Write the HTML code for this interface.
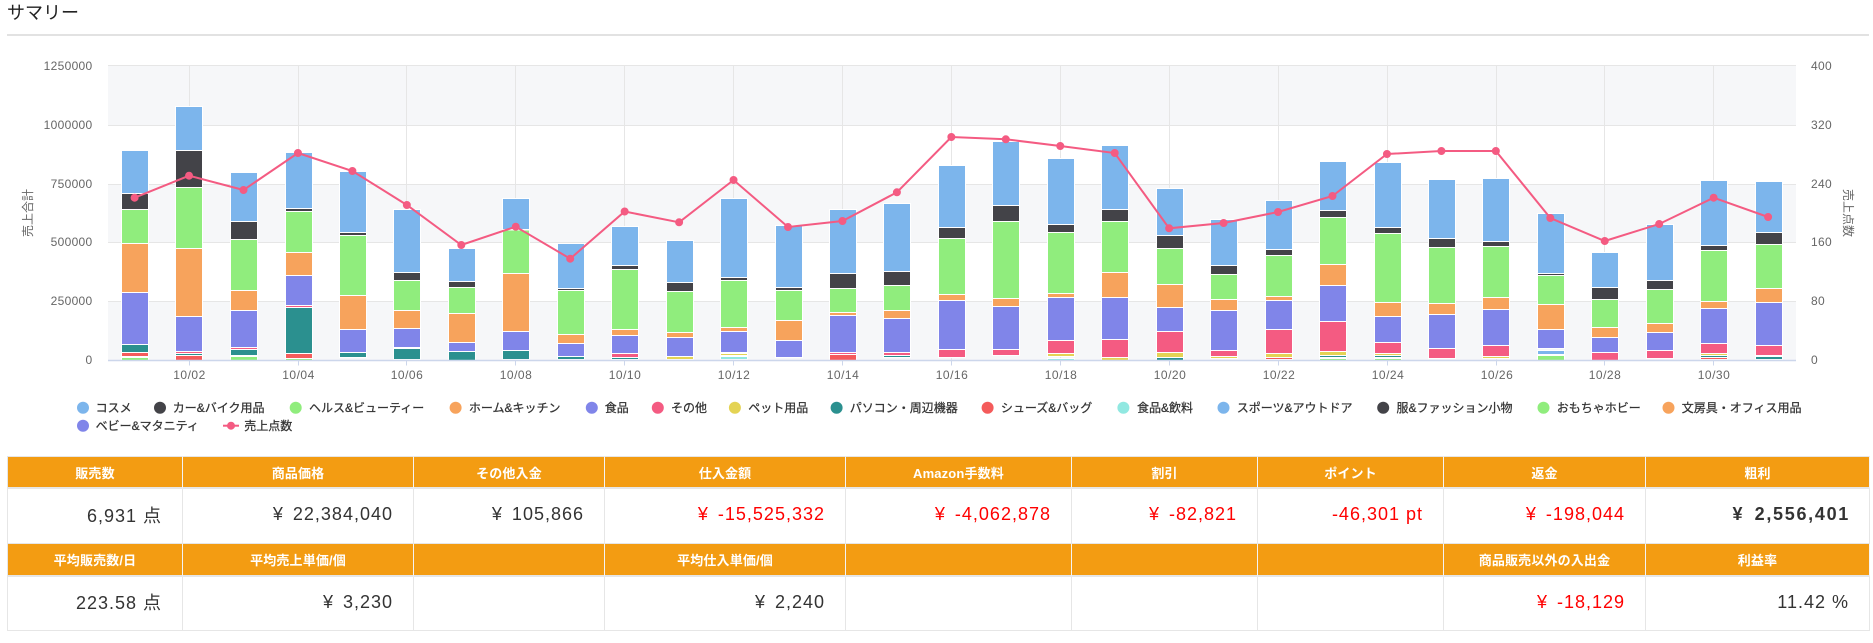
<!DOCTYPE html>
<html lang="ja"><head><meta charset="utf-8"><title>サマリー</title>
<style>
html,body{margin:0;padding:0;background:#fff}
body{width:1873px;height:643px;position:relative;overflow:hidden;font-family:"Liberation Sans","Noto Sans CJK JP",sans-serif;color:#333}
h1{position:absolute;left:7px;top:0;margin:0;font-size:18px;line-height:26px;font-weight:400;color:#222}
#rule{position:absolute;left:7px;top:34px;width:1862px;height:2px;background:#e2e2e2}
svg{position:absolute;left:0;top:0}
svg text{font-family:"Liberation Sans","Noto Sans CJK JP",sans-serif;font-size:12px;fill:#666}
.ax text{letter-spacing:.3px}
.xl text{letter-spacing:.5px}
.lg text{fill:#333;stroke:#333;stroke-width:.25px}
.bars rect{x:0;width:27px;stroke:#fff;stroke-width:1}
.B{fill:#7cb5ec}.D{fill:#434348}.G{fill:#90ed7d}.O{fill:#f7a35c}.P{fill:#8085e9}.K{fill:#f45b82}.Y{fill:#e4d354}.T{fill:#2b908f}.R{fill:#f45b5b}.C{fill:#91e8e1}
table{position:absolute;left:7px;top:456px;width:1863px;table-layout:fixed;border-collapse:separate;border-spacing:0;border-left:1px solid #e6e6e6}
th,td{box-sizing:border-box;border-right:1px solid #e6e6e6;padding:0;overflow:hidden;white-space:nowrap}
th{background:#f39c12;color:#fff;font-size:13px;font-weight:700;text-align:center;border-right-color:#f4f4f4;height:33px;border-bottom:2px solid #e6e6e6;letter-spacing:.15px}
tr:first-child th{border-top:1px solid #e6e6e6}
td{font-size:18px;text-align:right;padding-right:20px;color:#333;border-bottom:1px solid #e6e6e6;letter-spacing:1px;word-spacing:-1.5px}
td.n{word-spacing:0}
tr.a td{height:55px;padding-bottom:3px}
tr.c td{height:54px;padding-bottom:3px}
td.r{color:#f00}td.b{font-weight:700;letter-spacing:1.7px;padding-right:19px}
</style></head><body>
<h1>サマリー</h1><div id="rule"></div>
<svg width="1873" height="450" viewBox="0 0 1873 450">
<rect x="108" y="66" width="1688" height="59" fill="#f6f7f9"/><rect x="108" y="184" width="1688" height="58" fill="#f6f7f9"/><rect x="108" y="301" width="1688" height="59" fill="#f6f7f9"/>
<path d="M108 65.5H1796M108 125.5H1796M108 184.5H1796M108 242.5H1796M108 301.5H1796M189.5 66V360M298.5 66V360M406.5 66V360M515.5 66V360M624.5 66V360M733.5 66V360M842.5 66V360M951.5 66V360M1060.5 66V360M1169.5 66V360M1278.5 66V360M1387.5 66V360M1496.5 66V360M1604.5 66V360M1713.5 66V360" stroke="#e6e6e6" stroke-width="1" fill="none"/>
<g class="bars">
<g transform="translate(121.5)"><rect class="B" y="150.5" height="43"/><rect class="D" y="193.5" height="16"/><rect class="G" y="209.5" height="34"/><rect class="O" y="243.5" height="49"/><rect class="P" y="292.5" height="52"/><rect class="T" y="344.5" height="8"/><rect class="R" y="352.5" height="4"/><rect class="G" y="357.5" height="3"/></g>
<g transform="translate(175.5)"><rect class="B" y="106.5" height="44"/><rect class="D" y="150.5" height="37"/><rect class="G" y="187.5" height="61"/><rect class="O" y="248.5" height="68"/><rect class="P" y="316.5" height="35"/><rect class="K" y="351.5" height="2"/><rect class="T" y="353.5" height="2"/><rect class="R" y="355.5" height="5"/></g>
<g transform="translate(230.5)"><rect class="B" y="172.5" height="49"/><rect class="D" y="221.5" height="18"/><rect class="G" y="239.5" height="51"/><rect class="O" y="290.5" height="20"/><rect class="P" y="310.5" height="37"/><rect class="K" y="347.5" height="2"/><rect class="T" y="349.5" height="6"/><rect class="G" y="356.5" height="4"/></g>
<g transform="translate(285.5)"><rect class="B" y="152.5" height="56"/><rect class="D" y="208.5" height="3"/><rect class="G" y="211.5" height="41"/><rect class="O" y="252.5" height="23"/><rect class="P" y="275.5" height="30"/><rect class="K" y="305.5" height="2"/><rect class="T" y="307.5" height="46"/><rect class="R" y="353.5" height="5"/><rect class="G" y="358.5" height="2"/></g>
<g transform="translate(339.5)"><rect class="B" y="171.5" height="61"/><rect class="D" y="232.5" height="3"/><rect class="G" y="235.5" height="60"/><rect class="O" y="295.5" height="34"/><rect class="P" y="329.5" height="23"/><rect class="T" y="352.5" height="5"/></g>
<g transform="translate(393.5)"><rect class="B" y="209.5" height="63"/><rect class="D" y="272.5" height="8"/><rect class="G" y="280.5" height="30"/><rect class="O" y="310.5" height="18"/><rect class="P" y="328.5" height="19"/><rect class="T" y="348.5" height="11"/></g>
<g transform="translate(448.5)"><rect class="B" y="248.5" height="33"/><rect class="D" y="281.5" height="6"/><rect class="G" y="287.5" height="26"/><rect class="O" y="313.5" height="29"/><rect class="P" y="342.5" height="9"/><rect class="T" y="351.5" height="9"/></g>
<g transform="translate(502.5)"><rect class="B" y="198.5" height="31"/><rect class="G" y="230" height="43.5"/><rect class="O" y="273.5" height="58"/><rect class="P" y="331.5" height="19"/><rect class="T" y="350.5" height="9"/></g>
<g transform="translate(557.5)"><rect class="B" y="243.5" height="45"/><rect class="D" y="288.5" height="2"/><rect class="G" y="290.5" height="44"/><rect class="O" y="334.5" height="9"/><rect class="P" y="343.5" height="13"/><rect class="T" y="356.5" height="3"/></g>
<g transform="translate(611.5)"><rect class="B" y="226.5" height="39"/><rect class="D" y="265.5" height="4"/><rect class="G" y="269.5" height="60"/><rect class="O" y="329.5" height="6"/><rect class="P" y="335.5" height="18"/><rect class="K" y="353.5" height="4"/><rect class="T" y="357.5" height="2"/></g>
<g transform="translate(666.5)"><rect class="B" y="240.5" height="42"/><rect class="D" y="282.5" height="9"/><rect class="G" y="291.5" height="41"/><rect class="O" y="332.5" height="5"/><rect class="P" y="337.5" height="19"/><rect class="Y" y="356.5" height="3"/></g>
<g transform="translate(720.5)"><rect class="B" y="198.5" height="79"/><rect class="D" y="277.5" height="3"/><rect class="G" y="280.5" height="47"/><rect class="O" y="327.5" height="4"/><rect class="P" y="331.5" height="21"/><rect class="Y" y="353.5" height="2"/><rect class="C" y="356.5" height="3"/></g>
<g transform="translate(775.5)"><rect class="B" y="225.5" height="62"/><rect class="D" y="287.5" height="3"/><rect class="G" y="290.5" height="30"/><rect class="O" y="320.5" height="20"/><rect class="P" y="340.5" height="17"/></g>
<g transform="translate(829.5)"><rect class="B" y="209.5" height="64"/><rect class="D" y="273.5" height="15"/><rect class="G" y="288.5" height="24"/><rect class="O" y="312.5" height="3"/><rect class="P" y="315.5" height="37"/><rect class="K" y="352.5" height="2"/><rect class="R" y="354.5" height="6"/></g>
<g transform="translate(883.5)"><rect class="B" y="203.5" height="68"/><rect class="D" y="271.5" height="14"/><rect class="G" y="285.5" height="25"/><rect class="O" y="310.5" height="8"/><rect class="P" y="318.5" height="34"/><rect class="K" y="352.5" height="3"/><rect class="T" y="355.5" height="2"/></g>
<g transform="translate(938.5)"><rect class="B" y="165.5" height="62"/><rect class="D" y="227.5" height="11"/><rect class="G" y="238.5" height="56"/><rect class="O" y="294.5" height="6"/><rect class="P" y="300.5" height="49"/><rect class="K" y="349.5" height="8"/></g>
<g transform="translate(992.5)"><rect class="B" y="141.5" height="64"/><rect class="D" y="205.5" height="16"/><rect class="G" y="221.5" height="77"/><rect class="O" y="298.5" height="8"/><rect class="P" y="306.5" height="43"/><rect class="K" y="349.5" height="6"/></g>
<g transform="translate(1047.5)"><rect class="B" y="158.5" height="66"/><rect class="D" y="224.5" height="8"/><rect class="G" y="232.5" height="61"/><rect class="O" y="293.5" height="4"/><rect class="P" y="297.5" height="43"/><rect class="K" y="340.5" height="13"/><rect class="Y" y="353.5" height="3"/><rect class="C" y="358.5" height="2"/></g>
<g transform="translate(1101.5)"><rect class="B" y="145.5" height="64"/><rect class="D" y="209.5" height="12"/><rect class="G" y="221.5" height="51"/><rect class="O" y="272.5" height="25"/><rect class="P" y="297.5" height="42"/><rect class="K" y="339.5" height="18"/><rect class="Y" y="357.5" height="3"/></g>
<g transform="translate(1156.5)"><rect class="B" y="188.5" height="47"/><rect class="D" y="235.5" height="13"/><rect class="G" y="248.5" height="36"/><rect class="O" y="284.5" height="23"/><rect class="P" y="307.5" height="24"/><rect class="K" y="331.5" height="21"/><rect class="Y" y="352.5" height="5"/><rect class="T" y="357.5" height="3"/></g>
<g transform="translate(1210.5)"><rect class="B" y="219.5" height="46"/><rect class="D" y="265.5" height="9"/><rect class="G" y="274.5" height="25"/><rect class="O" y="299.5" height="11"/><rect class="P" y="310.5" height="40"/><rect class="K" y="350.5" height="6"/><rect class="Y" y="356.5" height="2"/></g>
<g transform="translate(1265.5)"><rect class="B" y="200.5" height="49"/><rect class="D" y="249.5" height="6"/><rect class="G" y="255.5" height="41"/><rect class="O" y="296.5" height="4"/><rect class="P" y="300.5" height="29"/><rect class="K" y="329.5" height="24"/><rect class="Y" y="353.5" height="4"/><rect class="R" y="357.5" height="2"/></g>
<g transform="translate(1319.5)"><rect class="B" y="161.5" height="49"/><rect class="D" y="210.5" height="7"/><rect class="G" y="217.5" height="47"/><rect class="O" y="264.5" height="21"/><rect class="P" y="285.5" height="36"/><rect class="K" y="321.5" height="30"/><rect class="Y" y="351.5" height="4"/><rect class="T" y="355.5" height="2"/><rect class="G" y="358.5" height="2"/></g>
<g transform="translate(1374.5)"><rect class="B" y="162.5" height="65"/><rect class="D" y="227.5" height="6"/><rect class="G" y="233.5" height="69"/><rect class="O" y="302.5" height="14"/><rect class="P" y="316.5" height="26"/><rect class="K" y="342.5" height="11"/><rect class="Y" y="353.5" height="2"/><rect class="T" y="355.5" height="2"/><rect class="G" y="358.5" height="2"/></g>
<g transform="translate(1428.5)"><rect class="B" y="179.5" height="59"/><rect class="D" y="238.5" height="9"/><rect class="G" y="247.5" height="56"/><rect class="O" y="303.5" height="11"/><rect class="P" y="314.5" height="34"/><rect class="K" y="348.5" height="10"/></g>
<g transform="translate(1482.5)"><rect class="B" y="178.5" height="63"/><rect class="D" y="241.5" height="5"/><rect class="G" y="246.5" height="51"/><rect class="O" y="297.5" height="12"/><rect class="P" y="309.5" height="36"/><rect class="K" y="345.5" height="11"/><rect class="Y" y="356.5" height="2"/></g>
<g transform="translate(1537.5)"><rect class="B" y="213.5" height="60"/><rect class="D" y="273.5" height="2"/><rect class="G" y="275.5" height="29"/><rect class="O" y="304.5" height="25"/><rect class="P" y="329.5" height="19"/><rect class="B" y="350.5" height="4"/><rect class="G" y="355.5" height="5"/></g>
<g transform="translate(1591.5)"><rect class="B" y="252.5" height="35"/><rect class="D" y="287.5" height="12"/><rect class="G" y="299.5" height="28"/><rect class="O" y="327.5" height="10"/><rect class="P" y="337.5" height="15"/><rect class="K" y="352.5" height="8"/></g>
<g transform="translate(1646.5)"><rect class="B" y="224.5" height="56"/><rect class="D" y="280.5" height="9"/><rect class="G" y="289.5" height="34"/><rect class="O" y="323.5" height="9"/><rect class="P" y="332.5" height="18"/><rect class="K" y="350.5" height="8"/></g>
<g transform="translate(1700.5)"><rect class="B" y="180.5" height="65"/><rect class="D" y="245.5" height="5"/><rect class="G" y="250.5" height="51"/><rect class="O" y="301.5" height="7"/><rect class="P" y="308.5" height="35"/><rect class="K" y="343.5" height="10"/><rect class="Y" y="353.5" height="2"/><rect class="T" y="355.5" height="2"/><rect class="R" y="357.5" height="2"/></g>
<g transform="translate(1755.5)"><rect class="B" y="181.5" height="51"/><rect class="D" y="232.5" height="12"/><rect class="G" y="244.5" height="44"/><rect class="O" y="288.5" height="14"/><rect class="P" y="302.5" height="43"/><rect class="K" y="345.5" height="10"/><rect class="T" y="356.5" height="3"/></g>
</g>
<path d="M108 360.5H1796" stroke="#ccd6eb" stroke-width="1.5" fill="none"/>
<path d="M189.5 360V365.5M298.5 360V365.5M406.5 360V365.5M515.5 360V365.5M624.5 360V365.5M733.5 360V365.5M842.5 360V365.5M951.5 360V365.5M1060.5 360V365.5M1169.5 360V365.5M1278.5 360V365.5M1387.5 360V365.5M1496.5 360V365.5M1604.5 360V365.5M1713.5 360V365.5" stroke="#ccd6eb" stroke-width="1" fill="none"/>
<polyline fill="none" stroke="#f45b82" stroke-width="2" points="134.6,197.7 189.05,175.7 243.5,190 297.95,153 352.4,171 406.85,205 461.3,245 515.75,226.7 570.2,258.7 624.65,211.5 679.1,222.3 733.55,180 788,227 842.45,221 896.9,192.3 951.35,137 1005.8,139.3 1060.25,146 1114.7,153 1169.15,228.3 1223.6,223 1278.05,212 1332.5,196 1386.95,154 1441.4,151 1495.85,151 1550.3,218 1604.75,241 1659.2,224 1713.65,197.7 1768.1,217"/>
<path fill="none" stroke="#f45b82" stroke-width="8" stroke-linecap="round" d="M134.6 197.7h0M189.05 175.7h0M243.5 190h0M297.95 153h0M352.4 171h0M406.85 205h0M461.3 245h0M515.75 226.7h0M570.2 258.7h0M624.65 211.5h0M679.1 222.3h0M733.55 180h0M788 227h0M842.45 221h0M896.9 192.3h0M951.35 137h0M1005.8 139.3h0M1060.25 146h0M1114.7 153h0M1169.15 228.3h0M1223.6 223h0M1278.05 212h0M1332.5 196h0M1386.95 154h0M1441.4 151h0M1495.85 151h0M1550.3 218h0M1604.75 241h0M1659.2 224h0M1713.65 197.7h0M1768.1 217h0"/>
<g text-anchor="end" class="ax">
<text x="92.5" y="70">1250000</text><text x="92.5" y="129">1000000</text><text x="92.5" y="188">750000</text><text x="92.5" y="246">500000</text><text x="92.5" y="305">250000</text><text x="92.5" y="364">0</text>
</g>
<g class="ax">
<text x="1811" y="70">400</text><text x="1811" y="129">320</text><text x="1811" y="188">240</text><text x="1811" y="246">160</text><text x="1811" y="305">80</text><text x="1811" y="364">0</text>
</g>
<g text-anchor="middle" class="xl">
<text x="189.5" y="379">10/02</text><text x="298.5" y="379">10/04</text><text x="407" y="379">10/06</text><text x="516" y="379">10/08</text><text x="625" y="379">10/10</text><text x="734" y="379">10/12</text><text x="843" y="379">10/14</text><text x="952" y="379">10/16</text><text x="1061" y="379">10/18</text><text x="1170" y="379">10/20</text><text x="1279" y="379">10/22</text><text x="1388" y="379">10/24</text><text x="1497" y="379">10/26</text><text x="1605" y="379">10/28</text><text x="1714" y="379">10/30</text>
</g>
<g text-anchor="middle">
<text transform="translate(28,213) rotate(-90)" y="4">売上合計</text>
<text transform="translate(1848,213) rotate(90)" y="4">売上点数</text>
</g>
<g class="lg">
<circle class="B" cx="83" cy="407.7" r="6"/><text x="95.6" y="412">コスメ</text>
<circle class="D" cx="160" cy="407.7" r="6"/><text x="172.8" y="412">カー&amp;バイク用品</text>
<circle class="G" cx="295.7" cy="407.7" r="6"/><text x="309" y="412">ヘルス&amp;ビューティー</text>
<circle class="O" cx="455.6" cy="407.7" r="6"/><text x="468.9" y="412">ホーム&amp;キッチン</text>
<circle class="P" cx="591.8" cy="407.7" r="6"/><text x="604.7" y="412">食品</text>
<circle class="K" cx="657.8" cy="407.7" r="6"/><text x="671" y="412">その他</text>
<circle class="Y" cx="734.9" cy="407.7" r="6"/><text x="748.2" y="412">ペット用品</text>
<circle class="T" cx="836.6" cy="407.7" r="6"/><text x="849.8" y="412">パソコン・周辺機器</text>
<circle class="R" cx="987.6" cy="407.7" r="6"/><text x="1000.9" y="412">シューズ&amp;バッグ</text>
<circle class="C" cx="1123.4" cy="407.7" r="6"/><text x="1137" y="412">食品&amp;飲料</text>
<circle class="B" cx="1223.5" cy="407.7" r="6"/><text x="1236.7" y="412">スポーツ&amp;アウトドア</text>
<circle class="D" cx="1383.2" cy="407.7" r="6"/><text x="1396.5" y="412">服&amp;ファッション小物</text>
<circle class="G" cx="1543.5" cy="407.7" r="6"/><text x="1556.8" y="412">おもちゃホビー</text>
<circle class="O" cx="1668.5" cy="407.7" r="6"/><text x="1681.7" y="412">文房具・オフィス用品</text>
<circle class="P" cx="83" cy="425.7" r="6"/><text x="95.6" y="430">ベビー&amp;マタニティ</text>
<path d="M223 425.7H239" stroke="#f45b82" stroke-width="2"/><circle class="K" cx="231" cy="425.7" r="4"/><text x="244.3" y="430">売上点数</text>
</g>
</svg>
<table>
<colgroup><col style="width:175px"><col style="width:231px"><col style="width:191px"><col style="width:241px"><col style="width:226px"><col style="width:186px"><col style="width:186px"><col style="width:202px"><col style="width:224px"></colgroup>
<tr><th>販売数</th><th>商品価格</th><th>その他入金</th><th>仕入金額</th><th>Amazon手数料</th><th>割引</th><th>ポイント</th><th>返金</th><th>粗利</th></tr>
<tr class="a"><td class="n">6,931 点</td><td>¥&nbsp;&nbsp;22,384,040</td><td>¥&nbsp;&nbsp;105,866</td><td class="r">¥&nbsp;&nbsp;-15,525,332</td><td class="r">¥&nbsp;&nbsp;-4,062,878</td><td class="r">¥&nbsp;&nbsp;-82,821</td><td class="r n">-46,301 pt</td><td class="r">¥&nbsp;&nbsp;-198,044</td><td class="b">¥&nbsp;&nbsp;2,556,401</td></tr>
<tr><th>平均販売数/日</th><th>平均売上単価/個</th><th></th><th>平均仕入単価/個</th><th></th><th></th><th></th><th>商品販売以外の入出金</th><th>利益率</th></tr>
<tr class="c"><td class="n">223.58 点</td><td>¥&nbsp;&nbsp;3,230</td><td></td><td>¥&nbsp;&nbsp;2,240</td><td></td><td></td><td></td><td class="r">¥&nbsp;&nbsp;-18,129</td><td class="n">11.42 %</td></tr>
</table>
</body></html>
